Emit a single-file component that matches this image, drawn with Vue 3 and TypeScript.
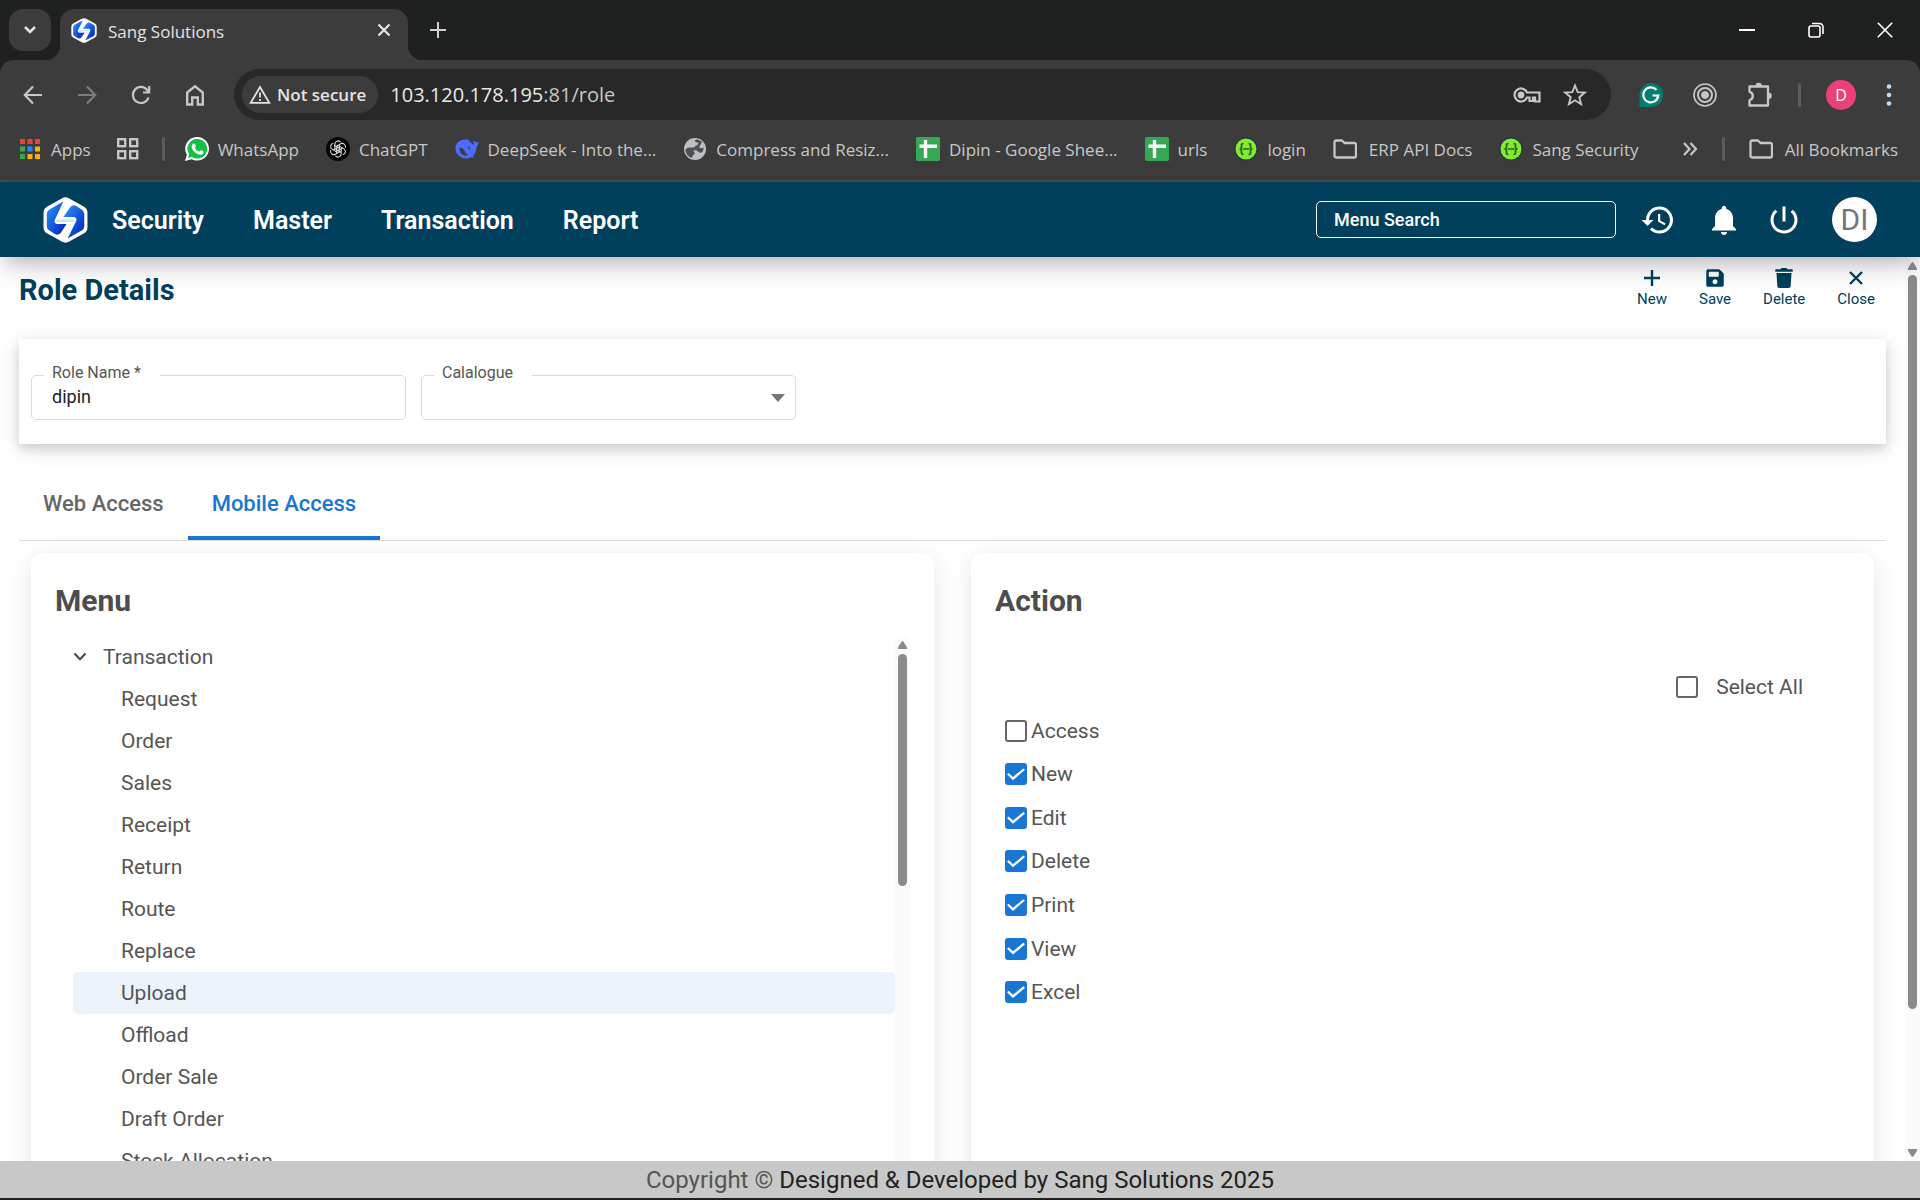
<script setup lang="ts">
import { ref } from 'vue'

interface Bookmark {
  label: string
  icon: 'whatsapp' | 'chatgpt' | 'deepseek' | 'globe' | 'sheet' | 'swagger' | 'folder'
}

interface Action {
  label: string
  checked: boolean
}

const bookmarks: Bookmark[] = [
  { label: 'WhatsApp', icon: 'whatsapp' },
  { label: 'ChatGPT', icon: 'chatgpt' },
  { label: 'DeepSeek - Into the...', icon: 'deepseek' },
  { label: 'Compress and Resiz...', icon: 'globe' },
  { label: 'Dipin - Google Shee...', icon: 'sheet' },
  { label: 'urls', icon: 'sheet' },
  { label: 'login', icon: 'swagger' },
  { label: 'ERP API Docs', icon: 'folder' },
  { label: 'Sang Security', icon: 'swagger' },
]

const appColors = ['#ea4335', '#ea4335', '#ea4335', '#34a853', '#1a8cff', '#fbb003', '#34a853', '#fbb003', '#fbb003']

const mainMenu = ['Security', 'Master', 'Transaction', 'Report']
const tabs = ['Web Access', 'Mobile Access']
const activeTab = ref('Mobile Access')

const treeItems = [
  'Request',
  'Order',
  'Sales',
  'Receipt',
  'Return',
  'Route',
  'Replace',
  'Upload',
  'Offload',
  'Order Sale',
  'Draft Order',
  'Stock Allocation',
]
const selectedItem = ref('Upload')

const roleName = ref('dipin')
const catalogue = ref('')
const search = ref('')
const selectAll = ref(false)
const actions = ref<Action[]>([
  { label: 'Access', checked: false },
  { label: 'New', checked: true },
  { label: 'Edit', checked: true },
  { label: 'Delete', checked: true },
  { label: 'Print', checked: true },
  { label: 'View', checked: true },
  { label: 'Excel', checked: true },
])
</script>

<template>
  <div class="screen">
    <svg class="defs" aria-hidden="true">
      <defs>
        <linearGradient id="logoFill" x1="0" y1="0" x2="1" y2="1">
          <stop offset="0" stop-color="#2a9bff" />
          <stop offset="1" stop-color="#0018b8" />
        </linearGradient>
        <symbol id="logo" viewBox="2 0 42 46" preserveAspectRatio="none">
          <path d="M19.500 1.500Q23-.8 26.500 1.500L40 9.500Q43.500 11.500 43.500 15.500V30.500Q43.500 34.500 40 36.500L26.500 44.500Q23 46.800 19.500 44.500L6 36.500Q2.500 34.500 2.500 30.500V15.500Q2.500 11.500 6 9.500Z" fill="#fff" />
          <path d="M21 4.500L8 12.500Q5.500 14 5.500 17V29Q5.500 32 8 33.500L13 37Q16 39 18.500 36L24 27H15Q12 26 13 23Z" fill="url(#logoFill)" />
          <path d="M25 41.500L38 33.500Q40.500 32 40.500 29V17Q40.500 14 38 12.500L33 9Q30 7 27.500 10L21 20H31Q34 21 33 24Z" fill="url(#logoFill)" />
          <path d="M15 22.500H31V25H14Z" fill="#cfe0ff" />
        </symbol>
      </defs>
    </svg>

    <header class="chrome">
      <div class="tabstrip">
        <button class="tab-search" aria-label="Search tabs">
          <svg width="14" height="10" viewBox="0 0 14 10"><path d="M2 2l5 5 5-5" fill="none" stroke="#e3e3e3" stroke-width="2.500" /></svg>
        </button>
        <div class="browser-tab">
          <svg width="26" height="25"><use href="#logo" /></svg>
          <span class="tab-title">Sang Solutions</span>
          <button class="plain" aria-label="Close tab">
            <svg width="14" height="14" viewBox="0 0 14 14"><path d="M1.500 1.500l11 11M12.500 1.500l-11 11" stroke="#e3e3e3" stroke-width="2.200" /></svg>
          </button>
        </div>
        <button class="plain new-tab" aria-label="New tab">
          <svg width="16" height="16" viewBox="0 0 16 16"><path d="M8 0v16M0 8h16" stroke="#d0d0d0" stroke-width="2" /></svg>
        </button>
        <div class="window-buttons">
          <button class="plain" aria-label="Minimize"><svg width="16" height="16" viewBox="0 0 16 16"><path d="M0 8h16" stroke="#fff" stroke-width="2" /></svg></button>
          <button class="plain" aria-label="Restore">
            <svg width="16" height="16" viewBox="0 0 16 16" fill="none" stroke="#fff" stroke-width="1.600"><rect x="1" y="4" width="11" height="11" rx="2" /><path d="M4 1.500h7.500a3.500 3.500 0 0 1 3.500 3.500v7" /></svg>
          </button>
          <button class="plain" aria-label="Close window"><svg width="16" height="16" viewBox="0 0 16 16"><path d="M.8.8l14.400 14.400M15.200.8L.8 15.200" stroke="#fff" stroke-width="1.600" /></svg></button>
        </div>
      </div>

      <div class="toolbar">
        <div class="nav-buttons">
          <button class="plain" aria-label="Back"><svg width="20" height="20" viewBox="0 0 20 20" fill="none" stroke="#c7c7c7" stroke-width="2.200"><path d="M19 10H2M10 1.500L1.800 10l8.200 8.500" /></svg></button>
          <button class="plain" aria-label="Forward"><svg width="20" height="20" viewBox="0 0 20 20" fill="none" stroke="#7d7d7d" stroke-width="2.200"><path d="M1 10h17M10 1.500L18.200 10 10 18.500" /></svg></button>
          <button class="plain" aria-label="Reload"><svg width="20" height="20" viewBox="0 0 20 20" fill="none" stroke="#c7c7c7" stroke-width="2.200"><path d="M17.500 12.500A8 8 0 1 1 16.200 5L18 7M18.200 1v6.500H12" /></svg></button>
          <button class="plain" aria-label="Home"><svg width="20" height="22" viewBox="0 0 20 22" fill="none" stroke="#c7c7c7" stroke-width="2.400"><path d="M2.200 8.500L10 2.200l7.800 6.300V20.500h-5V13.500H7.200v7h-5Z" /></svg></button>
        </div>
        <div class="omnibox">
          <button class="chip">
            <svg width="22" height="19" viewBox="0 0 22 19" fill="none" stroke="#e3e3e3" stroke-width="1.800"><path d="M11 2L20.300 17.800H1.700Z" /><path d="M11 7.500v5M11 14v2" /></svg>
            Not secure
          </button>
          <span class="url"><b>103.120.178.195</b>:81/role</span>
          <button class="plain" aria-label="Passwords">
            <svg width="28" height="20" viewBox="0 0 28 20" fill="none" stroke="#c7c7c7" stroke-width="2.200"><path d="M14 7.500H26.500v9h-4.500v-4H20v3.500h-3.500V12.500H14A6.500 6.500 0 1 1 14 7.500Z" /><circle cx="8" cy="10" r="2.300" fill="#c7c7c7" /></svg>
          </button>
          <button class="plain star" aria-label="Bookmark">
            <svg width="24" height="24" viewBox="0 0 24 24" fill="none" stroke="#c7c7c7" stroke-width="1.900"><path d="M12 2.500l2.700 6.600 7.100.5-5.500 4.600 1.800 7-6.100-3.900-6.100 3.900 1.800-7L2.200 9.600l7.100-.5Z" /></svg>
          </button>
        </div>
        <div class="extensions">
          <button class="plain" aria-label="Grammarly">
            <svg width="24" height="24" viewBox="0 0 24 24"><path d="M12 0a12 12 0 1 1 0 24H.500V12A12 12 0 0 1 12 0Z" fill="#027e6f" /><path d="M17.500 7A7.500 7.500 0 1 0 19.300 12.500H13.500M19 12.500l-1.500 5" fill="none" stroke="#fff" stroke-width="2.200" /></svg>
          </button>
          <button class="plain" aria-label="Recorder">
            <svg width="24" height="24" viewBox="0 0 24 24" fill="none" stroke="#c7c7c7"><circle cx="12" cy="12" r="11" stroke-width="1.600" /><circle cx="12" cy="12" r="7" stroke-width="2" /><circle cx="12" cy="12" r="3.500" fill="#c7c7c7" /></svg>
          </button>
          <button class="plain" aria-label="Extensions">
            <svg width="26" height="26" viewBox="0 0 26 26"><path d="M2.500 4.500H21V23.500H2.500V18a4.200 4.200 0 0 0 0-8.200Z" fill="none" stroke="#c7c7c7" stroke-width="2.300" stroke-linejoin="round" /><path d="M8.500 4a3.200 3.200 0 0 1 6.400 0ZM21.500 10.500a3.200 3.200 0 0 1 0 6.400Z" fill="#c7c7c7" /></svg>
          </button>
          <span class="bar"></span>
          <button class="profile" aria-label="Profile">D</button>
          <button class="plain" aria-label="Browser menu">
            <svg width="6" height="22" viewBox="0 0 6 22" fill="#bfdcf5"><circle cx="3" cy="2.500" r="2.300" /><circle cx="3" cy="11" r="2.300" /><circle cx="3" cy="19.500" r="2.300" /></svg>
          </button>
        </div>
      </div>

      <nav class="bookmarks" aria-label="Bookmarks">
        <div class="bookmarks-start">
          <a class="bookmark apps" href="#">
            <svg width="22" height="22" viewBox="0 0 22 22">
              <rect v-for="(color, i) in appColors" :key="i" :x="1 + (i % 3) * 7.500" :y="1 + Math.floor(i / 3) * 7.500" width="5" height="5" :fill="color" />
            </svg>
            Apps
          </a>
          <button class="plain" aria-label="Tab groups">
            <svg width="24" height="24" viewBox="0 0 24 24" fill="none" stroke="#c7c7c7" stroke-width="2.400"><rect x="2.200" y="2.200" width="7" height="7" /><rect x="14.200" y="2.200" width="7" height="7" /><rect x="2.200" y="14.200" width="7" height="7" /><rect x="14.200" y="14.200" width="7" height="7" /></svg>
          </button>
          <span class="bar"></span>
        </div>
        <div class="bookmark-list">
          <a v-for="b in bookmarks" :key="b.label" class="bookmark" href="#">
            <svg v-if="b.icon === 'whatsapp'" width="24" height="24" viewBox="0 0 24 24">
              <path d="M12.300 0a11.800 11.800 0 1 1-5.700 22.200L0 24l1.900-6.200A11.800 11.800 0 0 1 12.300 0Z" fill="#fff" />
              <path d="M12.300 2a9.800 9.800 0 1 1-5.300 18L3 21l1.100-3.800A9.800 9.800 0 0 1 12.300 2Z" fill="#10c143" />
              <path d="M8.700 6.500c.5-.2 1 0 1.200.5l.9 2c.2.800-1 1.500-.8 1.900 1 1.900 2.300 2.900 4.100 3.700.6.200 1.300-1.600 2-1.300l2.100 1c.6.500.2 1.900-.3 2.500-1 1.100-2.900 1.300-5.400.2-3-1.300-5.500-4.500-5.900-6.800-.2-1.600.8-3.100 2.100-3.700Z" fill="#fff" />
            </svg>
            <svg v-else-if="b.icon === 'chatgpt'" width="24" height="24" viewBox="0 0 24 24">
              <circle cx="12" cy="12" r="12" fill="#000" />
              <g fill="none" stroke="#dcdcdc" stroke-width="1.100">
                <path v-for="n in 6" :key="n" d="M8.800 12.500V7.200a3.300 3.300 0 0 1 5.800-2.100M8.800 8.600l5.200 3" :transform="`rotate(${n * 60} 12 12)`" />
              </g>
            </svg>
            <svg v-else-if="b.icon === 'deepseek'" width="24" height="24" viewBox="0 0 24 24">
              <path d="M23.500 4.800c-1.400 1.200-2.600.6-3.600-.2-.9-.7-1.300-1.300-1.500-.4-.4 1.500.3 2.500 1.100 3.200-1.300.3-2.600-.3-4-1.800-1.600-1.700-1.900-2-1.300-2.700-3.600-.8-7.800-.7-10.800 1.900C-.4 8-.2 13.600 2.600 17.200c3.400 4.400 9.200 5.300 13.400 3 .9.300 2.400.6 3.300.1-.8-.5-1.300-.9-1.400-1.300 2.700-2.700 3.600-6.400 3.500-9.200 1.600-1.100 2.400-3.100 2.100-5Z" fill="#4d6bfe" />
              <path d="M4.500 11c2-.6 4.200 1 5.500 3.500.9 1.700 2 2.800 3.600 3.600-3.300 1.200-6.300.2-7.900-2-.9-1.400-1.300-3-1.200-5.100ZM12.500 9.500c1.500 0 2.800 1.300 2.800 3.100-1.200-.3-2.500-1.300-2.800-3.100Z" fill="#3c3c3c" />
            </svg>
            <svg v-else-if="b.icon === 'globe'" width="24" height="24" viewBox="0 0 24 24">
              <circle cx="12" cy="12" r="11" fill="#bdc1c6" />
              <path d="M13 2.500c-2 1-1 2.500 1 3 2.500.8 1 2.500-1 3-1.500.4-1 2-3 2H6c-1.500 0-2.500 1-3.500 2 0 4 2.500 7 6 8.500 1.500-1 .5-2.500 2.500-3.500 1.500-1 .5-3-1-3.500 1-1 3-1 4.500 0 1 1.500 2.500 2 4 1.500 1.500-1 2.500-3 2-5-2 1-4.500 1-4-1 .2-1.500 2-2.500 2.500-4.500-2-2-4-2.500-6-2.500Z" fill="#3c3c3c" opacity=".85" />
            </svg>
            <svg v-else-if="b.icon === 'sheet'" width="24" height="24" viewBox="0 0 24 24">
              <rect width="24" height="24" rx="2" fill="#34a853" />
              <path d="M9.500 3v18M3.500 9.300h17.500" stroke="#fff" stroke-width="3.400" />
            </svg>
            <svg v-else-if="b.icon === 'swagger'" width="24" height="24" viewBox="0 0 24 24">
              <circle cx="12" cy="12" r="11.500" fill="#173647" />
              <circle cx="12" cy="12" r="10.500" fill="#85ea2d" />
              <path d="M9.500 6.500c-2.500 0-2 1.500-2 3s-.5 2.300-1.800 2.500c1.300.2 1.800 1 1.800 2.500s-.5 3 2 3M14.500 6.500c2.500 0 2 1.500 2 3s.5 2.300 1.800 2.500c-1.300.2-1.800 1-1.800 2.500s.5 3-2 3M8.500 12h7" fill="none" stroke="#27631b" stroke-width="1.700" />
            </svg>
            <svg v-else class="folder" width="24" height="20" viewBox="0 0 24 20" fill="none" stroke="#c7c7c7" stroke-width="2.300" stroke-linejoin="round"><path d="M1.500 17V3a1.500 1.500 0 0 1 1.500-1.500H9L11.500 4H21.500A1.500 1.500 0 0 1 23 5.500V17a1.500 1.500 0 0 1-1.500 1.500H3A1.500 1.500 0 0 1 1.500 17Z" /></svg>
            {{ b.label }}
          </a>
        </div>
        <div class="bookmarks-end">
          <button class="plain" aria-label="More bookmarks"><svg width="16" height="14" viewBox="0 0 16 14" fill="none" stroke="#c7c7c7" stroke-width="2.200"><path d="M2 1l5.500 6L2 13M8.500 1L14 7l-5.500 6" /></svg></button>
          <span class="bar"></span>
          <a class="bookmark" href="#">
            <svg class="folder" width="24" height="20" viewBox="0 0 24 20" fill="none" stroke="#c7c7c7" stroke-width="2.300" stroke-linejoin="round"><path d="M1.500 17V3a1.500 1.500 0 0 1 1.500-1.500H9L11.500 4H21.500A1.500 1.500 0 0 1 23 5.500V17a1.500 1.500 0 0 1-1.500 1.500H3A1.500 1.500 0 0 1 1.500 17Z" /></svg>
            All Bookmarks
          </a>
        </div>
      </nav>
    </header>

    <header class="appbar">
      <svg width="45" height="46"><use href="#logo" /></svg>
      <nav class="main-menu" aria-label="Main">
        <button v-for="item in mainMenu" :key="item" class="plain">{{ item }}</button>
      </nav>
      <div class="appbar-end">
        <input v-model="search" class="search" type="text" placeholder="Menu Search" aria-label="Menu Search" />
        <button class="plain" aria-label="History">
          <svg width="36" height="36" viewBox="0 0 24 24" fill="#fff"><path d="M13 3c-4.970 0-9 4.030-9 9H1l3.890 3.890.070.140L9 12H6c0-3.870 3.130-7 7-7s7 3.130 7 7-3.130 7-7 7c-1.930 0-3.680-.790-4.940-2.060l-1.420 1.420C8.270 19.990 10.510 21 13 21c4.970 0 9-4.030 9-9s-4.030-9-9-9zm-1 5v5l4.280 2.540.720-1.210-3.500-2.080V8H12z" /></svg>
        </button>
        <button class="plain bell" aria-label="Notifications">
          <svg width="36" height="36" viewBox="0 0 24 24" fill="#fff"><path d="M12 22c1.100 0 2-.9 2-2h-4c0 1.100.89 2 2 2zm6-6v-5c0-3.070-1.640-5.640-4.500-6.320V4c0-.83-.67-1.500-1.500-1.500s-1.500.67-1.500 1.500v.68C7.630 5.360 6 7.920 6 11v5l-2 2v1h16v-1l-2-2z" /></svg>
        </button>
        <button class="plain" aria-label="Log out">
          <svg width="36" height="36" viewBox="0 0 24 24" fill="#fff"><path d="M13 3h-2v10h2V3zm4.830 2.170l-1.420 1.420C17.990 7.860 19 9.810 19 12c0 3.870-3.130 7-7 7s-7-3.130-7-7c0-2.190 1.010-4.140 2.580-5.420L6.170 5.170C4.230 6.820 3 9.260 3 12c0 4.970 4.030 9 9 9s9-4.030 9-9c0-2.740-1.230-5.180-3.170-6.830z" /></svg>
        </button>
        <button class="avatar" aria-label="Account">DI</button>
      </div>
    </header>

    <div class="viewport">
      <main class="page">
        <div class="title-row">
          <h1>Role Details</h1>
          <div class="page-actions">
            <button>
              <svg width="20" height="20" viewBox="0 0 20 20"><path d="M10 2v16M2 10h16" stroke="#00405d" stroke-width="2.400" /></svg>
              New
            </button>
            <button>
              <svg width="20" height="20" viewBox="-32 0 512 512" fill="#00405d"><path d="M433.941 129.941l-83.882-83.882A48 48 0 0 0 316.118 32H48C21.490 32 0 53.490 0 80v352c0 26.510 21.490 48 48 48h352c26.510 0 48-21.490 48-48V163.882a48 48 0 0 0-14.059-33.941zM224 416c-35.346 0-64-28.654-64-64 0-35.346 28.654-64 64-64s64 28.654 64 64c0 35.346-28.654 64-64 64zm96-304.520V212c0 6.627-5.373 12-12 12H76c-6.627 0-12-5.373-12-12V108c0-6.627 5.373-12 12-12h228.520c3.183 0 6.235 1.264 8.485 3.515l3.480 3.480A11.996 11.996 0 0 1 320 111.480z" /></svg>
              Save
            </button>
            <button>
              <svg width="20" height="20" viewBox="-32 0 512 512" fill="#00405d"><path d="M432 32H312l-9.400-18.700A24 24 0 0 0 281.100 0H166.800a23.720 23.720 0 0 0-21.400 13.300L136 32H16A16 16 0 0 0 0 48v32a16 16 0 0 0 16 16h416a16 16 0 0 0 16-16V48a16 16 0 0 0-16-16zM53.200 467a48 48 0 0 0 47.900 45h245.800a48 48 0 0 0 47.900-45L416 128H32z" /></svg>
              Delete
            </button>
            <button>
              <svg width="20" height="20" viewBox="0 0 20 20"><path d="M4 4l12 12M16 4L4 16" stroke="#00405d" stroke-width="2.400" /></svg>
              Close
            </button>
          </div>
        </div>

        <form class="form-card" @submit.prevent>
          <fieldset class="field">
            <legend><label for="role-name">Role Name *</label></legend>
            <input id="role-name" v-model="roleName" type="text" />
          </fieldset>
          <fieldset class="field">
            <legend><label for="catalogue">Calalogue</label></legend>
            <select id="catalogue" v-model="catalogue"><option value=""></option></select>
            <svg class="caret" width="14" height="8" viewBox="0 0 14 8"><path d="M0 0h14L7 8Z" fill="#757575" /></svg>
          </fieldset>
        </form>

        <div class="tabs" role="tablist">
          <button v-for="tab in tabs" :key="tab" role="tab" :aria-selected="tab === activeTab" :class="{ active: tab === activeTab }" @click="activeTab = tab">{{ tab }}</button>
        </div>

        <div class="panels">
          <section class="panel">
            <h2>Menu</h2>
            <div class="tree-box">
              <ul class="tree" role="tree">
                <li role="treeitem" aria-expanded="true">
                  <div class="branch">
                    <svg width="14" height="10" viewBox="0 0 14 10"><path d="M1.500 1.500L7 7.200l5.500-5.700" fill="none" stroke="#4d4d4d" stroke-width="2.200" /></svg>
                    Transaction
                  </div>
                  <ul role="group">
                    <li v-for="item in treeItems" :key="item" class="leaf" role="treeitem" :class="{ selected: item === selectedItem }" @click="selectedItem = item">{{ item }}</li>
                  </ul>
                </li>
              </ul>
              <div class="scrollbar">
                <svg width="9" height="8" viewBox="0 0 9 8"><path d="M4.500 0Q5.500 0 9 6.500V8H0V6.500Q3.500 0 4.500 0Z" fill="#8b8b8b" /></svg>
                <span class="thumb menu-thumb"></span>
              </div>
            </div>
          </section>
          <section class="panel">
            <h2>Action</h2>
            <label class="select-all"><input v-model="selectAll" type="checkbox" />Select All</label>
            <div class="action-list">
              <label v-for="a in actions" :key="a.label"><input v-model="a.checked" type="checkbox" />{{ a.label }}</label>
            </div>
          </section>
        </div>
      </main>
      <div class="scrollbar">
        <svg width="9" height="8" viewBox="0 0 9 8"><path d="M4.500 0Q5.500 0 9 6.500V8H0V6.500Q3.500 0 4.500 0Z" fill="#8b8b8b" /></svg>
        <span class="thumb page-thumb"></span>
        <svg class="down" width="9" height="8" viewBox="0 0 9 8"><path d="M4.500 8Q5.500 8 9 1.500V0H0V1.500Q3.500 8 4.500 8Z" fill="#8b8b8b" /></svg>
      </div>
    </div>

    <footer class="footer">Copyright © <span>Designed &amp; Developed by Sang Solutions 2025</span></footer>
  </div>
</template>

<style>
body {
  margin: 0;
}
</style>

<style scoped>
* {
  box-sizing: border-box;
}

.screen {
  display: flex;
  flex-direction: column;
  height: 100vh;
  overflow: hidden;
  background: #fff;
  color: #555;
  font-family: Roboto, "Liberation Sans", sans-serif;
  font-size: 21px;
}

.defs {
  position: absolute;
  width: 0;
  height: 0;
}

svg {
  display: block;
  flex: none;
}

button {
  font: inherit;
  color: inherit;
  cursor: pointer;
}

.plain {
  display: flex;
  padding: 0;
  border: 0;
  background: none;
}

/* Browser chrome */
.chrome {
  flex: none;
  background: #1f2120;
  color: #c7c7c7;
  font-family: "Open Sans", "Noto Sans", sans-serif;
  font-size: 17px;
}

.tabstrip {
  display: flex;
  align-items: center;
  height: 60px;
  padding: 0 19px 0 9px;
}

.tab-search {
  display: flex;
  align-items: center;
  justify-content: center;
  width: 42px;
  height: 42px;
  border: 0;
  border-radius: 14px;
  background: #3c3c3c;
}

.browser-tab {
  position: relative;
  display: flex;
  align-items: center;
  align-self: flex-end;
  width: 348px;
  height: 51px;
  margin-left: 9px;
  padding: 0 17px 9px 11px;
  border-radius: 14px 14px 0 0;
  background: #3c3c3c;
  color: #e3e3e3;
}

.browser-tab::before,
.browser-tab::after {
  content: "";
  position: absolute;
  bottom: 0;
  width: 14px;
  height: 14px;
}

.browser-tab::before {
  right: 100%;
  background: radial-gradient(circle at 0 0, transparent 14px, #3c3c3c 14px);
}

.browser-tab::after {
  left: 100%;
  background: radial-gradient(circle at 100% 0, transparent 14px, #3c3c3c 14px);
}

.tab-title {
  flex: 1;
  margin: 2px 0 0 11px;
}

.new-tab {
  margin-left: 22px;
}

.window-buttons {
  display: flex;
  gap: 53px;
  margin-left: auto;
  padding-right: 8px;
}

.toolbar {
  display: flex;
  align-items: center;
  height: 69px;
  padding: 0 28px 0 23px;
  border-radius: 14px 14px 0 0;
  background: #3c3c3c;
}

.nav-buttons {
  display: flex;
  align-items: center;
  gap: 34px;
  width: 211px;
}

.omnibox {
  display: flex;
  flex: 1;
  align-items: center;
  height: 51px;
  padding: 0 24px 0 8px;
  border-radius: 26px;
  background: #282828;
  color: #c7c7c7;
  font-size: 20px;
}

.chip {
  display: flex;
  align-items: center;
  gap: 6px;
  height: 37px;
  padding: 0 12px 0 7px;
  border: 0;
  border-radius: 19px;
  background: #3c3c3c;
  color: #e3e3e3;
  font-size: 17px;
  font-weight: 600;
}

.url {
  flex: 1;
  margin-left: 12px;
}

.url b {
  color: #e8e8e8;
  font-weight: 400;
}

.star {
  margin-left: 22px;
}

.extensions {
  display: flex;
  align-items: center;
  gap: 30px;
  padding-left: 28px;
}

.extensions .bar {
  margin: 0 -5px;
}

.bar {
  width: 3px;
  height: 24px;
  border-radius: 2px;
  background: #5c5c5c;
}

.profile {
  width: 30px;
  height: 30px;
  padding: 0;
  border: 0;
  border-radius: 50%;
  background: #ec407a;
  color: #fff;
  font-size: 16px;
}

.bookmarks {
  display: flex;
  align-items: center;
  height: 53px;
  padding: 0 22px 11px 19px;
  border-bottom: 2px solid #4a4a4a;
  background: #3c3c3c;
  white-space: nowrap;
}

.bookmarks-start,
.bookmarks-end {
  display: flex;
  align-items: center;
  gap: 24px;
}

.bookmark-list {
  display: flex;
  align-items: center;
  gap: 27px;
  margin-left: 20px;
}

.bookmarks-start {
  gap: 22px;
}

.bookmarks-end {
  margin-left: auto;
}

.bookmark {
  display: flex;
  align-items: center;
  gap: 9px;
  color: #c7c7c7;
  text-decoration: none;
}

.apps {
  gap: 10px;
  padding-right: 3px;
}

.folder {
  margin-right: 3px;
}

/* Application bar */
.appbar {
  position: relative;
  z-index: 2;
  display: flex;
  flex: none;
  align-items: center;
  height: 75px;
  padding: 0 43px;
  background: #00405d;
  box-shadow: 0 10px 20px -6px rgba(0, 0, 0, 0.24), 0 10px 36px rgba(0, 0, 0, 0.1);
  color: #fff;
}

.main-menu {
  display: flex;
  gap: 49px;
  margin-left: 24px;
  padding-top: 1px;
  font-size: 25px;
  font-weight: 600;
}

.appbar-end {
  display: flex;
  align-items: center;
  gap: 24px;
  margin-left: auto;
}

.search {
  width: 300px;
  height: 37px;
  padding: 0 17px;
  border: 1px solid #fff;
  border-radius: 5px;
  background: transparent;
  color: #fff;
  font: 500 18px Roboto, sans-serif;
}

.search::placeholder {
  color: #fff;
  opacity: 1;
}

.bell {
  margin-left: 6px;
}

.avatar {
  width: 45px;
  height: 45px;
  margin-left: 6px;
  padding: 0;
  border: 0;
  border-radius: 50%;
  background: #fff;
  color: #757575;
  font-size: 30px;
}

/* Page */
.viewport {
  display: flex;
  flex: 1;
  min-height: 0;
  overflow: hidden;
}

.page {
  flex: 1;
  padding: 0 19px;
}

.title-row {
  display: flex;
  align-items: flex-start;
  justify-content: space-between;
  height: 82px;
  padding: 11px 11px 0 0;
}

h1,
h2 {
  margin: 0;
  font-size: 30px;
  font-weight: 700;
  line-height: 44px;
}

h1 {
  color: #00405d;
  font-size: 29px;
}

.page-actions {
  display: flex;
  gap: 32px;
}

.page-actions button {
  display: flex;
  flex-direction: column;
  align-items: center;
  gap: 2px;
  padding: 0;
  border: 0;
  background: none;
  color: #00405d;
  font-size: 15px;
  line-height: 18px;
}

.form-card {
  display: flex;
  gap: 15px;
  height: 105px;
  padding: 24px 12px;
  background: #fff;
  box-shadow: 0 5px 10px rgba(0, 0, 0, 0.14), 0 4px 24px rgba(0, 0, 0, 0.1);
}

.field {
  position: relative;
  width: 375px;
  height: 57px;
  margin: 0;
  padding: 0;
  border: 1px solid #dadada;
  border-radius: 5px;
}

.field legend {
  margin-left: 12px;
  padding: 0 19px 0 8px;
  font-size: 16px;
  line-height: 24px;
}

.field label {
  display: block;
  position: relative;
  top: -2px;
}

.field input,
.field select {
  display: block;
  width: 100%;
  height: 20px;
  padding: 0 20px;
  border: 0;
  outline: 0;
  background: none;
  color: #222;
  font: 18px/20px Roboto, sans-serif;
  appearance: none;
}

.caret {
  position: absolute;
  right: 10px;
  top: 7px;
}

.tabs {
  display: flex;
  height: 97px;
  padding-top: 36px;
  border-bottom: 1px solid #dcdcdc;
}

.tabs button {
  height: 60px;
  padding: 0 24px 10px;
  border: 0;
  border-bottom: 4px solid transparent;
  background: none;
  color: #666;
  font-size: 22px;
  font-weight: 500;
}

.tabs button.active {
  border-bottom-color: #1976d2;
  color: #1976d2;
}

.panels {
  display: flex;
  gap: 37px;
  padding: 12px 12px 0;
}

.panel {
  flex: 1;
  height: 700px;
  padding: 26px 24px;
  border-radius: 12px;
  background: #fff;
  box-shadow: 0 5px 25px rgba(0, 0, 0, 0.1);
}

h2 {
  color: #4d4d4d;
}

.tree-box {
  display: flex;
  height: 620px;
  margin-top: 13px;
  padding-left: 18px;
}

ul {
  margin: 0;
  padding: 0;
  list-style: none;
}

.tree {
  flex: 1;
  line-height: 42px;
}

.branch {
  display: flex;
  align-items: center;
  gap: 16px;
}

.leaf {
  padding-left: 48px;
  border-radius: 5px;
  cursor: pointer;
}

.selected {
  background: #ecf3fb;
}

.scrollbar {
  display: flex;
  flex: none;
  flex-direction: column;
  align-items: center;
  gap: 5px;
  width: 15px;
  padding: 5px 0 4px;
  background: #fbfbfb;
}

.thumb {
  width: 9px;
  border-radius: 5px;
  background: #8b8b8b;
}

.menu-thumb {
  height: 232px;
}

.page-thumb {
  height: 82%;
}

.down {
  margin-top: auto;
}

input[type="checkbox"] {
  position: relative;
  width: 22px;
  height: 22px;
  margin: 0;
  border: 2px solid #666;
  border-radius: 3px;
  background: #fff;
  appearance: none;
}

input[type="checkbox"]:checked {
  border-color: #1976d2;
  background: #1976d2;
}

input[type="checkbox"]:checked::after {
  content: "";
  position: absolute;
  inset: 2px 0 2px 0;
  background: #fff;
  clip-path: polygon(0 50%, 9% 40%, 33% 69%, 91% 8%, 100% 18%, 33% 92%);
}

.select-all {
  display: flex;
  align-items: center;
  justify-content: flex-end;
  gap: 18px;
  height: 42px;
  margin: 43px 47px 0 0;
}

.action-list {
  display: grid;
  grid-template-rows: repeat(7, 1fr);
  height: 305px;
  margin: 1px 0 0 10px;
}

.action-list label {
  display: flex;
  align-items: center;
  gap: 4px;
}

.footer {
  position: relative;
  flex: none;
  height: 39px;
  border-bottom: 2px solid #202020;
  background: #c8c8c8;
  color: #555;
  font-size: 24px;
  line-height: 38px;
  text-align: center;
}

.footer span {
  color: #222;
}
</style>
